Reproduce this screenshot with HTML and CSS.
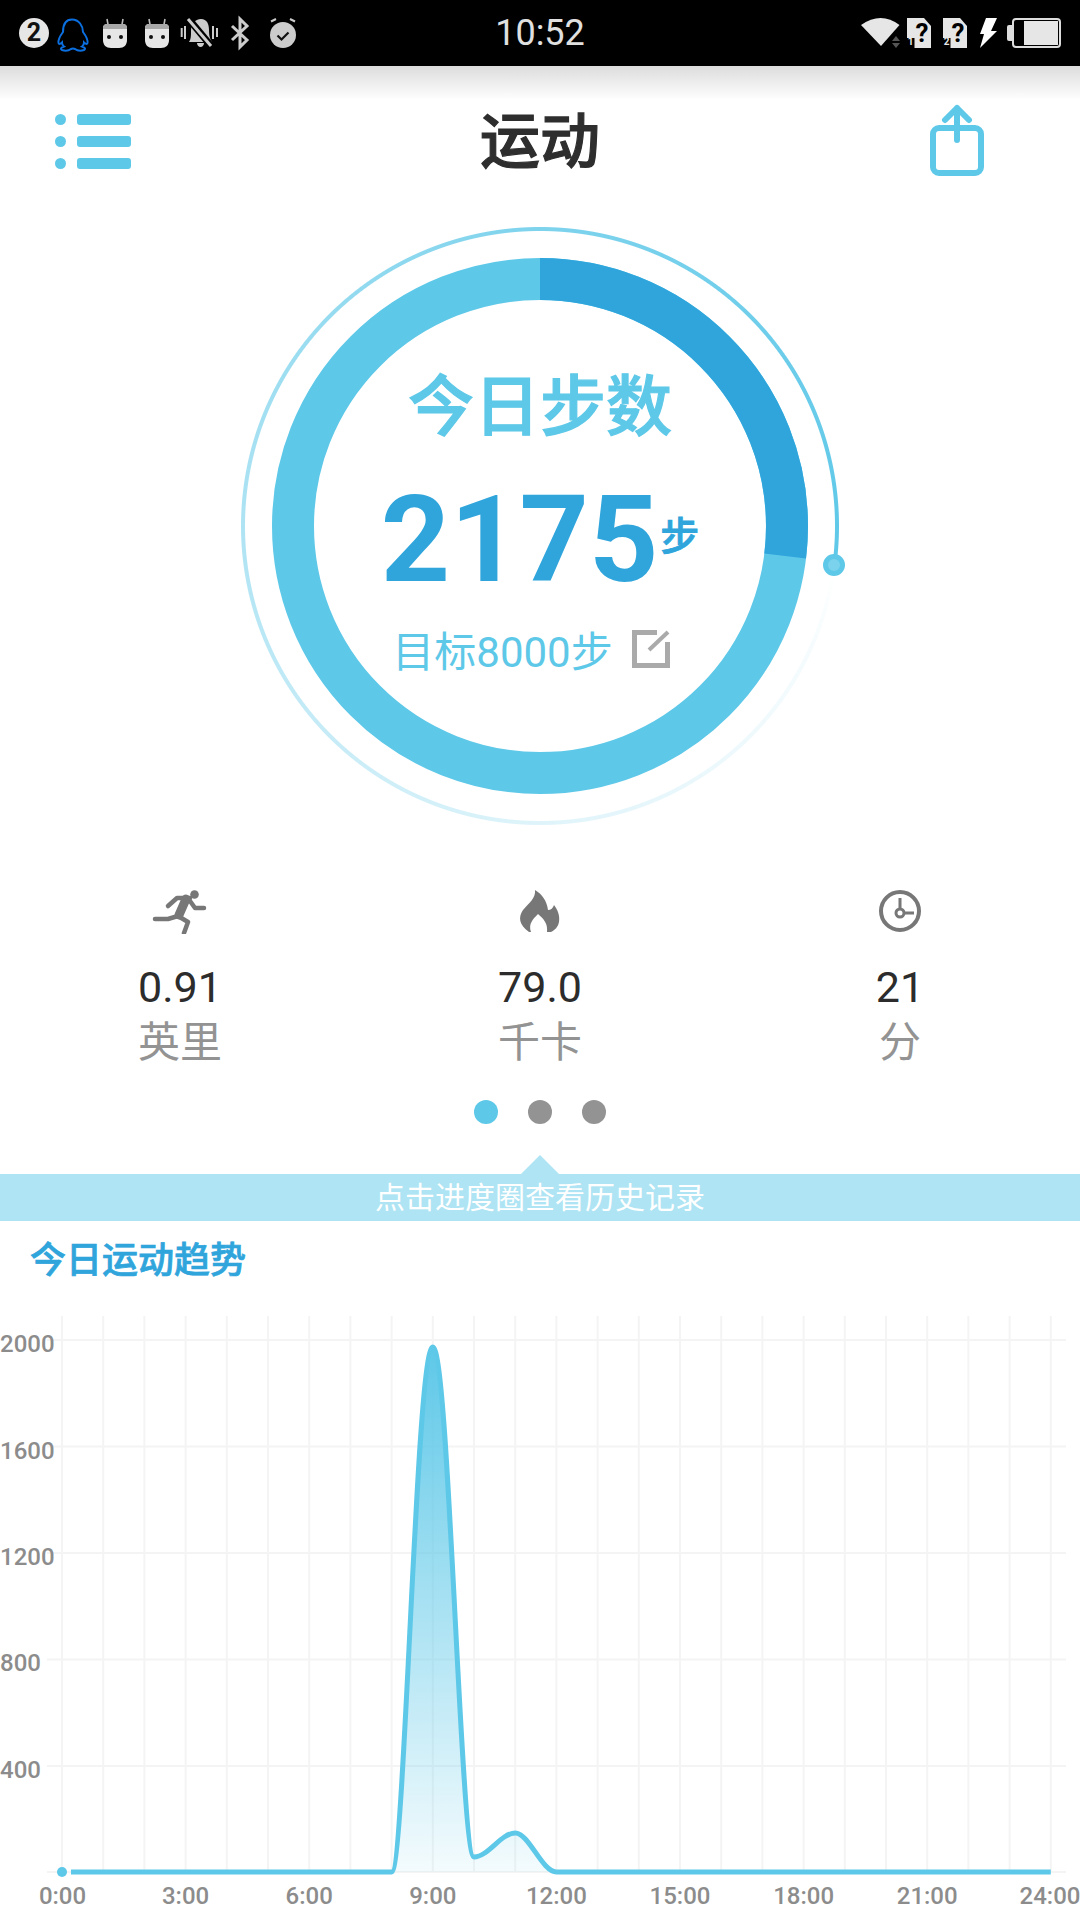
FILE: index.html
```html
<!DOCTYPE html>
<html lang="zh-CN">
<head>
  <meta charset="UTF-8" />
  <meta name="viewport" content="width=device-width, initial-scale=1.0"/>
  <title>运动</title>
  <link rel="stylesheet" href="styles.css">
</head>
<body>
  <svg class="defs" width="0" height="0">
    <symbol id="droid" viewBox="0 0 24 30">
      <path d="M5 6.500 4 1M19 6.500 20 1" stroke="#bbb" stroke-width="1.600" fill="none"/>
      <path d="M4 6h16c2.500 0 4 1.500 4 4v12c0 5-3 8-8 8H8c-5 0-8-3-8-8V10c0-2.500 1.500-4 4-4z" fill="#e6e6e6"/>
      <path d="M4 6h16c2.500 0 4 1.500 4 4v1H0v-1c0-2.500 1.500-4 4-4z" fill="#a8a8a8"/>
      <circle cx="6" cy="19" r="2" fill="#111"/>
      <circle cx="18" cy="19" r="2" fill="#111"/>
    </symbol>
    <symbol id="sim" viewBox="0 0 24 30">
      <path d="M0 0h17l7 8v22H0z" fill="#e6e6e6"/>
      <rect y="20" width="7.500" height="10" fill="#000"/>
    </symbol>
  </svg>

  <div class="status">
    <div class="status-left">
      <span class="badge">2</span>
      <svg class="ic-qq" viewBox="0 0 48 40"><path d="M23 6.500C16 6.500 14 13 14 19c-3 4-5 8-4.500 11 .5 1.500 2 1 3.500-.5 0 1.500.5 3 2 4-3 1-4 2.500-2 3.500 3 1 7 .5 9-1 1-.5 3-.5 4 0 2 1.500 6 2 9 1 2-1 1-2.500-2-3.500 1.500-1 2-2.500 2-4 1.500 1.500 3 2 3.500.5.5-3-1.500-7-4.500-11 0-6-4-12.500-11-12.500z"/></svg>
      <svg class="ic-droid"><use href="#droid"/></svg>
      <svg class="ic-droid second"><use href="#droid"/></svg>
      <svg class="ic-bell" viewBox="0 0 38 34">
        <path d="M1.700 12v9M5 10v13M33 10v13M37 12v9" stroke="#ccc" stroke-width="2" fill="none"/>
        <path d="M21 3c6 0 8 5 8 11 0 6 1 9 3 12H9c2-3 2-6 2-11 0-7 4-12 10-12z" fill="#ccc"/>
        <path d="M17 27h7c0 2-1.500 4-3.500 4S17 29 17 27z" fill="#ccc"/>
        <path d="M7 1l25 30" stroke="#000" stroke-width="7"/>
        <path d="M8 3l23 27" stroke="#ccc" stroke-width="3"/>
      </svg>
      <svg class="ic-bt" viewBox="0 0 20 30"><path d="M2 8l15 14-7 7V1l7 7L2 22" fill="none" stroke="#ccc" stroke-width="3"/></svg>
      <svg class="ic-alarm" viewBox="0 0 28 32">
        <circle cx="14" cy="18" r="13" fill="#ccc"/>
        <path d="M8.500 18.500l4 4 7-7" fill="none" stroke="#111" stroke-width="2.200"/>
        <path d="M2 4.500 7 2M26 4.500 21 2" stroke="#ccc" stroke-width="2"/>
      </svg>
    </div>
    <div class="clock">10:52</div>
    <div class="status-right">
      <svg class="ic-wifi" viewBox="0 0 44 32">
        <path d="M21 29 1 8Q21-6 39.500 8z" fill="#e6e6e6"/>
        <path d="M32 24l4-5 4 5zM32 26h8l-4 5z" fill="#555"/>
      </svg>
      <svg class="ic-sim" viewBox="0 0 24 30">
        <use href="#sim"/>
        <text class="sim-q" x="15" y="24">?</text>
        <text class="sim-n" x="3.500" y="27">1</text>
      </svg>
      <svg class="ic-sim second" viewBox="0 0 24 30">
        <use href="#sim"/>
        <text class="sim-q" x="15" y="24">?</text>
        <text class="sim-n" x="3.500" y="27">2</text>
      </svg>
      <svg class="ic-bolt" viewBox="0 0 17 30"><path d="M6 0h11l-6 13h6L0 30l4-14H0z" fill="#fff"/></svg>
      <div class="battery"><span class="battery-level"></span></div>
    </div>
  </div>

  <header class="topbar">
    <div class="menu">
      <div class="menu-row"><i></i><b></b></div>
      <div class="menu-row"><i></i><b></b></div>
      <div class="menu-row"><i></i><b></b></div>
    </div>
    <h1>运动</h1>
    <svg class="share" viewBox="0 0 60 74">
      <rect x="6" y="24" width="48" height="45" rx="6" fill="none" stroke="#5ec8e8" stroke-width="6"/>
      <path d="M30 36V4M18 16 30 4l12 12" fill="none" stroke="#5ec8e8" stroke-width="6" stroke-linecap="round" stroke-linejoin="round"/>
    </svg>
  </header>

  <section class="gauge">
    <div class="gauge-trail"></div>
    <svg class="gauge-ring" viewBox="0 0 620 620">
      <circle cx="310" cy="310" r="247" fill="none" stroke="#5ec8e8" stroke-width="42"/>
      <circle cx="310" cy="310" r="247" fill="none" stroke="#2fa5dc" stroke-width="42" stroke-dasharray="418 1134" transform="rotate(-90 310 310)"/>
    </svg>
    <span class="gauge-dot"></span>
    <div class="gauge-text">
      <div class="gauge-title">今日步数</div>
      <div class="gauge-count"><span class="count-num">2175</span><span class="count-unit">步</span></div>
      <div class="gauge-goal">
        <span>目标8000步</span>
        <svg class="edit" viewBox="0 0 38 38">
          <path d="M25 2.500H2.500v33h33V12" fill="none" stroke="#aaa" stroke-width="5"/>
          <path d="M17 20 36 2" stroke="#aaa" stroke-width="4"/>
        </svg>
      </div>
    </div>
  </section>

  <section class="stats">
    <div class="stat">
      <svg class="stat-icon" viewBox="0 6 80 46">
        <circle cx="54.500" cy="12.500" r="4.300" fill="#777"/>
        <path d="M28 24l9-8h13" fill="none" stroke="#777" stroke-width="4.500" stroke-linecap="round" stroke-linejoin="round"/>
        <path d="M46 17 39 33" stroke="#777" stroke-width="9" stroke-linecap="round"/>
        <path d="M50 19l5 7h9M38 34l-10 3H15M38 34l10 6-4 11" fill="none" stroke="#777" stroke-width="4.500" stroke-linecap="round" stroke-linejoin="round"/>
      </svg>
      <div class="stat-value">0.91</div>
      <div class="stat-label">英里</div>
    </div>
    <div class="stat">
      <svg class="stat-icon" viewBox="0 0 60 46">
        <path d="M19 44C9 37 8 29 13 22c6-7 13-12 12-20 7 4 12 11 13 20 3 0 5-2 6-5 4 5 6 11 5 17-1 5-4 8-8 10h-4c1-8-3-13-9-18-5 5-10 10-7 18z" fill="#777"/>
      </svg>
      <div class="stat-value">79.0</div>
      <div class="stat-label">千卡</div>
    </div>
    <div class="stat">
      <svg class="stat-icon" viewBox="0 0 60 46">
        <circle cx="30" cy="23" r="19" fill="none" stroke="#777" stroke-width="4"/>
        <circle cx="30" cy="25" r="4" fill="none" stroke="#777" stroke-width="3"/>
        <path d="M30 21V10M34 25h10" stroke="#777" stroke-width="3"/>
      </svg>
      <div class="stat-value">21</div>
      <div class="stat-label">分</div>
    </div>
  </section>

  <div class="pager">
    <span class="pager-dot active"></span>
    <span class="pager-dot"></span>
    <span class="pager-dot"></span>
  </div>

  <div class="hint">点击进度圈查看历史记录</div>

  <h2 class="trend-title">今日运动趋势</h2>

  <svg class="chart" viewBox="0 1300 1080 620">
    <defs>
      <linearGradient id="areaFill" x1="0" y1="0" x2="0" y2="1">
        <stop offset="0" stop-color="#5ec8e8"/>
        <stop offset="1" stop-color="#5ec8e8" stop-opacity="0.07"/>
      </linearGradient>
    </defs>
    <!-- grid -->
    <path class="grid" d="M47 1340H1066M47 1446.500H1066M47 1553H1066M47 1659.500H1066M47 1766H1066M47 1872H1066"/>
    <path class="grid" d="M62 1316V1872M103.200 1316V1872M144.400 1316V1872M185.600 1316V1872M226.800 1316V1872M268 1316V1872M309.200 1316V1872M350.400 1316V1872M391.600 1316V1872M432.800 1316V1872M474 1316V1872M515.200 1316V1872M556.400 1316V1872M597.600 1316V1872M638.800 1316V1872M680 1316V1872M721.200 1316V1872M762.400 1316V1872M803.600 1316V1872M844.800 1316V1872M886 1316V1872M927.200 1316V1872M968.400 1316V1872M1009.600 1316V1872M1050.800 1316V1872"/>
    <!-- steps per hour -->
    <path fill="url(#areaFill)" d="M391.600 1872C405 1872 416 1347 432.800 1347C449 1347 460.300 1857 474 1857C488 1857 501 1833 515.200 1833C529 1833 542 1872 556.400 1872Z"/>
    <path class="line" d="M71 1872H391.600C405 1872 416 1347 432.800 1347C449 1347 460.300 1857 474 1857C488 1857 501 1833 515.200 1833C529 1833 542 1872 556.400 1872H1050.800"/>
    <circle cx="62" cy="1872" r="5" fill="#5ec8e8"/>
    <g class="axis">
      <text x="0" y="1352">2000</text>
      <text x="0" y="1458.500">1600</text>
      <text x="0" y="1564.500">1200</text>
      <text x="0" y="1671">800</text>
      <text x="0" y="1777.500">400</text>
    </g>
    <g class="axis axis-x">
      <text x="62.500" y="1904">0:00</text>
      <text x="185.600" y="1904">3:00</text>
      <text x="309.200" y="1904">6:00</text>
      <text x="432.800" y="1904">9:00</text>
      <text x="556.400" y="1904">12:00</text>
      <text x="680" y="1904">15:00</text>
      <text x="803.600" y="1904">18:00</text>
      <text x="927.200" y="1904">21:00</text>
      <text x="1050" y="1904">24:00</text>
    </g>
  </svg>
</body>
</html>
```

FILE: styles.css
```css
* {
  box-sizing: border-box;
}
html, body {
  margin: 0;
  height: 1920px;
  overflow: hidden;
}
body {
  width: 1080px;
  background: #fff;
  font-family: Roboto, "Noto Sans CJK SC", sans-serif;
  color: #2c2c2c;
}

.defs {
  position: absolute;
}

/* status bar */
.status {
  height: 66px;
  background: #000;
  display: grid;
  grid-template-columns: 1fr auto 1fr;
  align-items: center;
  padding: 0 19px;
}
.status-left, .status-right {
  display: flex;
  align-items: center;
}
.status-right {
  justify-content: flex-end;
}
.status svg {
  display: block;
  flex: none;
  overflow: visible;
}
.clock {
  font-size: 36px;
  color: #e0e0e0;
}
.badge {
  width: 30px;
  height: 30px;
  border-radius: 50%;
  background: #e6e6e6;
  color: #111;
  font-size: 25px;
  font-weight: 700;
  line-height: 30px;
  text-align: center;
}
.ic-qq {
  width: 48px;
  height: 40px;
  fill: none;
  stroke: #0b6fe0;
  stroke-width: 2;
}
.ic-droid {
  width: 24px;
  height: 30px;
  margin-left: 6px;
}
.ic-droid.second {
  margin-left: 18px;
}
.ic-bell {
  width: 38px;
  height: 34px;
  margin-left: 11px;
}
.ic-bt {
  width: 20px;
  height: 30px;
  margin-left: 12px;
}
.ic-alarm {
  width: 28px;
  height: 32px;
  margin-left: 19px;
}
.ic-wifi {
  width: 44px;
  height: 32px;
}
.ic-sim {
  width: 24px;
  height: 30px;
  margin-left: 3px;
}
.ic-sim.second {
  margin-left: 12px;
}
.sim-q {
  font-size: 26px;
  font-weight: 700;
  text-anchor: middle;
  fill: #000;
}
.sim-n {
  font-size: 10px;
  font-weight: 700;
  text-anchor: middle;
  fill: #e6e6e6;
}
.ic-bolt {
  width: 17px;
  height: 30px;
  margin-left: 13px;
}
.battery {
  position: relative;
  width: 49px;
  height: 30px;
  margin-left: 15px;
  border: 2px solid #ddd;
  border-radius: 4px;
  padding: 1px;
  display: flex;
  justify-content: flex-end;
}
.battery::before {
  content: "";
  position: absolute;
  left: -7px;
  top: 5px;
  width: 5px;
  height: 16px;
  background: #ddd;
  border-radius: 2px 0 0 2px;
}
.battery-level {
  width: 34px;
  background: #e6e6e6;
}

/* header */
.topbar {
  height: 154px;
  background: linear-gradient(#dcdcdc, #fff 34px);
  display: grid;
  grid-template-columns: 1fr auto 1fr;
  align-items: center;
  padding: 0 55px;
}
.topbar h1 {
  margin: 0;
  font-size: 60px;
  font-weight: 500;
  line-height: 70px;
  color: #2e2e2e;
  -webkit-text-stroke: 1.2px #2e2e2e;
}
.menu {
  display: flex;
  flex-direction: column;
  gap: 11px;
  margin-top: -4px;
}
.menu-row {
  display: flex;
  align-items: center;
  gap: 11px;
}
.menu-row i {
  width: 11px;
  height: 11px;
  border-radius: 50%;
  background: #5ec8e8;
}
.menu-row b {
  width: 54px;
  height: 11px;
  border-radius: 3px;
  background: #5ec8e8;
}
.share {
  justify-self: end;
  width: 60px;
  height: 74px;
  margin: -4px 38px 0 0;
}

/* step ring */
.gauge {
  position: relative;
  width: 620px;
  height: 620px;
  margin: -4px auto 0;
}
.gauge-ring {
  position: absolute;
  inset: 0;
}
.gauge-trail {
  position: absolute;
  inset: 10px;
  border-radius: 50%;
  background: conic-gradient(from 98deg, rgba(94,200,232,0) 0deg, rgba(94,200,232,0.05) 14deg, rgba(94,200,232,0.2) 82deg, rgba(94,200,232,0.5) 172deg, rgba(94,200,232,0.8) 262deg, #5ec8e8 360deg);
  -webkit-mask: radial-gradient(closest-side, transparent 294.500px, #000 295.500px, #000 298.500px, transparent 299.500px);
  mask: radial-gradient(closest-side, transparent 294.500px, #000 295.500px, #000 298.500px, transparent 299.500px);
}
.gauge-dot {
  position: absolute;
  left: 593px;
  top: 338px;
  width: 22px;
  height: 22px;
  border-radius: 50%;
  background: #7ad2ec;
  border: 5px solid #5ec8e8;
}
.gauge-text {
  position: absolute;
  inset: 0;
  display: flex;
  flex-direction: column;
  align-items: center;
  padding-top: 157px;
}
.gauge-title {
  font-size: 66px;
  font-weight: 500;
  line-height: 70px;
  color: #5ec8e8;
  -webkit-text-stroke: 1.2px #5ec8e8;
}
.gauge-count {
  display: flex;
  align-items: center;
  gap: 2px;
  margin-top: 37px;
  color: #2fa5dc;
}
.count-num {
  font-size: 121px;
  font-weight: 700;
  line-height: 120px;
}
.count-unit {
  margin-top: -6px;
  font-size: 39px;
  font-weight: 500;
  line-height: 48px;
  -webkit-text-stroke: 0.8px #2fa5dc;
}
.gauge-goal {
  display: flex;
  align-items: center;
  gap: 19px;
  margin-top: 29px;
  padding-right: 18px;
  font-size: 42px;
  line-height: 48px;
  color: #5ec8e8;
}
.edit {
  width: 38px;
  height: 38px;
  margin-top: -8px;
}

/* distance, calories, time */
.stats {
  display: grid;
  grid-template-columns: repeat(3, 1fr);
  margin-top: 52px;
}
.stat {
  display: flex;
  flex-direction: column;
  align-items: center;
}
.stat-icon {
  display: block;
  height: 46px;
  width: auto;
}
.stat-value {
  margin-top: 29px;
  font-size: 43px;
  line-height: 48px;
}
.stat-label {
  margin-top: 8px;
  font-size: 42px;
  line-height: 48px;
  color: #939393;
}

.pager {
  display: flex;
  justify-content: center;
  gap: 30px;
  margin-top: 33px;
}
.pager-dot {
  width: 24px;
  height: 24px;
  border-radius: 50%;
  background: #939393;
}
.pager-dot.active {
  background: #5ec8e8;
}

.hint {
  position: relative;
  margin-top: 50px;
  height: 47px;
  line-height: 47px;
  background: #aee4f3;
  color: #fff;
  font-size: 30px;
  text-align: center;
}
.hint::before {
  content: "";
  position: absolute;
  left: 521px;
  top: -19px;
  border-left: 19px solid transparent;
  border-right: 19px solid transparent;
  border-bottom: 19px solid #aee4f3;
}

.trend-title {
  margin: 15px 0 0 30px;
  font-size: 36px;
  font-weight: 500;
  line-height: 50px;
  color: #2fa5dc;
  -webkit-text-stroke: 0.7px #2fa5dc;
}

/* chart */
.chart {
  display: block;
  width: 1080px;
  height: 620px;
  margin-top: 14px;
}
.grid {
  fill: none;
  stroke: #f4f4f4;
  stroke-width: 2;
}
.line {
  fill: none;
  stroke: #5ec8e8;
  stroke-width: 5;
}
.axis {
  font-size: 24px;
  font-weight: 500;
  fill: #8c8c8c;
}
.axis-x {
  text-anchor: middle;
}
```
